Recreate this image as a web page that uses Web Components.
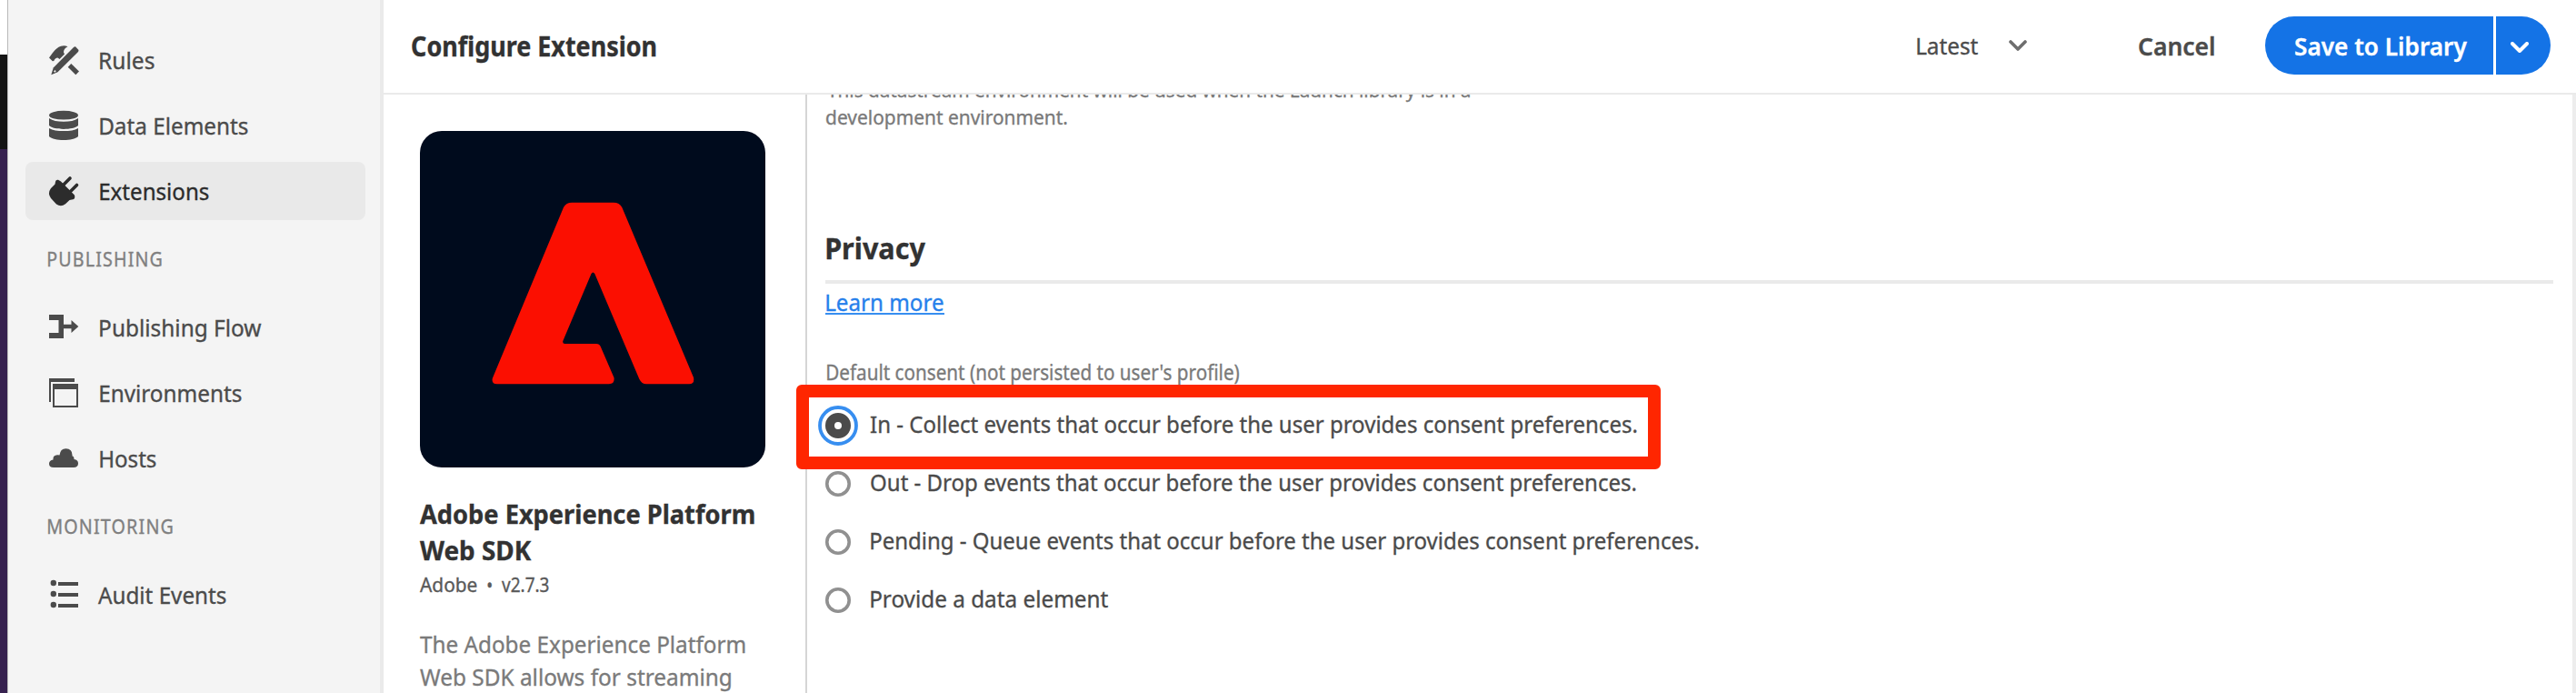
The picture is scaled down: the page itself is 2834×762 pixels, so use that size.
<!DOCTYPE html>
<html lang="en">
<head>
<meta charset="utf-8">
<title>Configure Extension</title>
<style>
html, body { margin: 0; height: 100%; overflow: hidden; background: #fff; }
body { font-family: "Noto Sans", "Open Sans", sans-serif; font-size: 26px; color: #4b4b4b; }
</style>
</head>
<body>
<app-shell>
  <side-nav slot="nav">
    <nav-group>
      <nav-item icon="rules" w="60">Rules</nav-item>
      <nav-item icon="data" w="163">Data Elements</nav-item>
      <nav-item icon="plug" w="120" selected>Extensions</nav-item>
    </nav-group>
    <nav-heading w="125">PUBLISHING</nav-heading>
    <nav-group>
      <nav-item icon="flow" w="178">Publishing Flow</nav-item>
      <nav-item icon="windows" w="156">Environments</nav-item>
      <nav-item icon="cloud" w="62">Hosts</nav-item>
    </nav-group>
    <nav-heading w="137">MONITORING</nav-heading>
    <nav-group>
      <nav-item icon="list" w="141" style="gap:22px">Audit Events</nav-item>
    </nav-group>
  </side-nav>
  <page-header slot="header"></page-header>
  <extension-card slot="card"></extension-card>
  <privacy-form slot="form"></privacy-form>
</app-shell>

<script>
const define = (name, html, after) => {
  const template = document.createElement('template');
  template.innerHTML = html;
  customElements.define(name, class extends HTMLElement {
    connectedCallback() {
      if (this.shadowRoot) return;
      this.attachShadow({ mode: 'open' }).append(template.content.cloneNode(true));
      if (after) after(this, this.shadowRoot);
    }
  });
};

const icons = {
  rules: '<path d="M0 13.500 4 8Q8 2.500 13 0.800Q17 -0.300 20.500 1.200Q15.800 3.500 16 7.500L17 9.500 11.500 15 9.500 13.500Q6.500 13.500 5.300 17L3.800 17.300Z"/><path d="M24.300 20 33 28.500 29.300 32.200 20.700 23.700Z"/><path d="M29 1.300 32.500 4.900Q32.700 6.300 31.500 7.500L9.500 29.300 2.300 32.200 4.700 24.500 27 2Q28.200 0.900 29 1.300Z"/><path d="M5.800 27.800 7 29" stroke="#f4f4f4" stroke-width="2"/>',
  data: '<ellipse cx="16" cy="4.700" rx="16" ry="4.900"/><path d="M0 8C4 10.800 9 11.700 16 11.700S28 10.800 32 8V16C29 18.600 23 19.900 16 19.900S3 18.600 0 16Z"/><path d="M0 18.900C4 21.200 9 22 16 22S28 21.200 32 18.900V28C29 30.700 23 32 16 32S3 30.700 0 28Z"/>',
  plug: '<path d="M7 5.800Q7.500 3.300 10 3.800L13 5.500 27 19.500Q28.500 20.500 28.300 22.500Q28.300 25.500 25 25.500L22.500 26 18 30.300Q13 34 8 30.500L2 24Q-2 18.500 2 13L6.500 8.500Z"/><path d="M15.500 9.500 23 2M23 17 30.500 9.500" stroke="currentColor" stroke-width="3.600" stroke-linecap="round"/>',
  flow: '<path d="M0 2H16V12.800H24.500V8L32.300 15 24.500 22V17.200H16V28H0V22H10.500V8H0Z"/>',
  windows: '<path d="M0 0H28V4H2V26H0Z"/><path fill-rule="evenodd" d="M4 6H32V32H4ZM6 12V30H30V12Z"/>',
  cloud: '<path d="M5 26Q0 26 0 22Q0 18 4.500 17.500Q4 12.500 9 12.200Q10.500 12 11.500 12.600Q12.300 5.300 18.500 5.300Q26 5.500 25.500 13.500Q27.500 13.500 27.500 17Q32 17.500 32 21.600Q32 26 27 26Z"/>',
  list: '<circle cx="4.800" cy="3" r="3.200"/><circle cx="4.800" cy="15" r="3.200"/><circle cx="4.800" cy="27" r="3.200"/><path d="M10 2H32V6H10ZM10 14H32V18H10ZM10 26H32V30H10Z"/>'
};

define('app-shell', `
<style>
:host { display: grid; grid-template-columns: 8px 414px 1fr; height: 762px; width: 2834px; position: relative; overflow: hidden; background: #fff; }
.edge { display: grid; grid-template-rows: 60px 104px 1fr; }
.edge i:nth-child(2) { background: #141414; }
.edge i:nth-child(3) { background: #36214f; }
main { display: grid; grid-template-rows: 104px 658px; min-width: 0; }
.panes { display: grid; grid-template-columns: 464px 1fr; min-height: 0; }
.frame { position: absolute; left: 876px; top: 423px; width: 951px; height: 93px; box-sizing: border-box; border: 14px solid #ff2600; border-radius: 6px; }
</style>
<div class="edge"><i></i><i></i><i></i></div>
<slot name="nav"></slot>
<main><slot name="header"></slot><div class="panes"><slot name="card"></slot><slot name="form"></slot></div></main>
<div class="frame"></div>`);

define('side-nav', `
<style>
:host { display: flex; flex-direction: column; box-sizing: border-box; background: #f4f4f4; border-left: 1px solid #b9b9b9; border-right: 4px solid #eaeaea; padding: 34px 16px 0 19px; }
</style><slot></slot>`);

define('nav-group', `<style>:host { display: flex; flex-direction: column; gap: 8px; }</style><slot></slot>`);

define('nav-heading', `
<style>:host { display: flex; align-items: center; height: 83px; padding: 0 0 3px 25px; font-size: 22px; letter-spacing: 1.300px; color: #808080; }</style>
<fit-text></fit-text>`, (el, root) => {
  const t = root.querySelector('fit-text');
  t.setAttribute('w', el.getAttribute('w'));
  t.textContent = el.textContent;
});

define('nav-item', `
<style>
:host { display: flex; align-items: center; gap: 23.700px; height: 64px; width: 374px; box-sizing: border-box; padding-left: 26px; border-radius: 8px; color: #4b4b4b; }
:host([selected]) { background: #e9e9e9; color: #2c2c2c; }
svg { display: block; width: 32px; height: 32px; fill: currentColor; overflow: visible; flex: none; }
</style>
<svg viewBox="0 0 32 32"></svg><fit-text></fit-text>`, (el, root) => {
  root.querySelector('svg').innerHTML = icons[el.getAttribute('icon')];
  const t = root.querySelector('fit-text');
  t.setAttribute('w', el.getAttribute('w'));
  t.textContent = el.textContent;
});

define('page-header', `
<style>
:host { display: flex; align-items: center; box-sizing: border-box; height: 104px; padding: 0 28px 2px 31px; border-bottom: 2px solid #eaeaea; }
.title { font-size: 29.500px; font-weight: 700; color: #323232; padding-top: 1px; }
.actions { display: flex; align-items: center; margin-left: auto; }
svg { display: block; fill: none; stroke-linecap: round; stroke-linejoin: round; }
.latest { display: flex; align-items: center; gap: 34px; margin-right: 123px; }
.cancel { font-size: 27px; font-weight: 600; margin-right: 56px; }
.split { display: flex; gap: 3px; height: 64px; color: #fff; font-size: 27px; font-weight: 600; }
.save { display: flex; align-items: center; box-sizing: border-box; width: 251px; padding-left: 33px; background: #1473e6; border-radius: 32px 0 0 32px; }
.more { display: flex; align-items: center; box-sizing: border-box; width: 60px; padding: 4px 0 0 16px; background: #1473e6; border-radius: 0 32px 32px 0; }
</style>
<fit-text class="title" w="269">Configure Extension</fit-text>
<div class="actions">
  <div class="latest"><fit-text w="67">Latest</fit-text><svg width="20" height="12" viewBox="0 0 20 12" stroke="#6e6e6e" stroke-width="3.600"><path d="M2 2 10 10 18 2"/></svg></div>
  <fit-text class="cancel" w="83">Cancel</fit-text>
  <div class="split">
    <div class="save"><fit-text w="189">Save to Library</fit-text></div>
    <div class="more"><svg width="20" height="12" viewBox="0 0 20 12" stroke="#fff" stroke-width="4"><path d="M2 2 10 10 18 2"/></svg></div>
  </div>
</div>`);

define('extension-card', `
<style>
:host { display: flex; flex-direction: column; align-items: flex-start; padding: 40px 0 0 40px; overflow: hidden; box-sizing: border-box; }
svg { display: block; flex: none; }
.title { margin-top: 31px; font-size: 29px; font-weight: 700; line-height: 40px; color: #323232; }
.meta { display: flex; margin-top: 4px; font-size: 22px; line-height: 26px; color: #5a5a5a; }
.dot { margin: 0 11px; }
.about { margin-top: 35px; line-height: 36px; color: #7a7a7a; }
</style>
<svg width="380" height="370" viewBox="462 144 380 370">
  <rect x="462" y="144" width="380" height="370" rx="24" fill="#000b1d"/>
  <path fill="#fb0f01" d="M629.300 222.800H675Q681.500 222.800 684.300 228L763 415Q764.500 422.200 758.300 422.200H711Q706 422.200 703.300 416.700L654.300 301Q652.300 298 650.500 301L619.300 375Q618.700 378 621.500 378H656Q659.500 378 660.700 381L675.500 415.300Q676.500 422.200 670 422.200H546.700Q540.500 422 541.800 416L620 228Q622.800 222.800 629.300 222.800Z"/>
</svg>
<div class="title"><fit-text w="368">Adobe Experience Platform</fit-text><fit-text w="123">Web SDK</fit-text></div>
<div class="meta"><fit-text w="63">Adobe</fit-text><fit-text class="dot" w="5">•</fit-text><fit-text w="52">v2.7.3</fit-text></div>
<div class="about"><fit-text w="358">The Adobe Experience Platform</fit-text><fit-text w="342">Web SDK allows for streaming</fit-text></div>`);

define('radio-option', `
<style>
:host { display: flex; align-items: center; height: 64px; gap: 21.500px; }
svg { display: block; width: 28px; height: 28px; overflow: visible; fill: none; flex: none; }
.on { display: none; }
:host([checked]) .on { display: inline; }
:host([checked]) .off { display: none; }
fit-text { padding-bottom: 4px; }
</style>
<svg viewBox="0 0 28 28"><circle class="off" cx="14" cy="14" r="12.200" stroke="#909090" stroke-width="3.600"/><g class="on"><circle cx="14" cy="14" r="20" stroke="#378ef0" stroke-width="3.800"/><circle cx="14" cy="14" r="9" stroke="#4b4b4b" stroke-width="10"/></g></svg>
<fit-text></fit-text>`, (el, root) => {
  const t = root.querySelector('fit-text');
  t.setAttribute('w', el.getAttribute('w'));
  t.textContent = el.textContent;
});

define('privacy-form', `
<style>
:host { display: block; box-sizing: border-box; overflow: hidden; border-left: 2px solid #d5d5d5; border-right: 4px solid #ededed; padding: 0 21px 0 20px; }
.help { margin-top: -20px; font-size: 22.500px; line-height: 30px; color: #7a7a7a; padding-left: 1px; }
.help :first-child { margin-left: 1px; }
h2 { margin: 109px 0 0 1px; font-size: 33px; font-weight: 700; line-height: 40px; color: #323232; }
hr { margin: 15px 0 4px; height: 4px; border: 0; background: #eaeaea; }
a { display: block; width: 131px; height: 28px; line-height: 32px; color: #2680eb; border-bottom: 2px solid #378ef0; }
a fit-text { margin-left: 1px; }
.legend { margin: 48px 0 12px 1.500px; font-size: 23px; line-height: 30px; color: #7a7a7a; }
</style>
<div class="help"><fit-text w="707">This datastream environment will be used when the Launch library is in a</fit-text><fit-text w="265">development environment.</fit-text></div>
<h2><fit-text w="109">Privacy</fit-text></h2>
<hr>
<a><fit-text w="129">Learn more</fit-text></a>
<div class="legend"><fit-text w="453">Default consent (not persisted to user's profile)</fit-text></div>
<radio-option w="843" checked>In - Collect events that occur before the user provides consent preferences.</radio-option>
<radio-option w="842">Out - Drop events that occur before the user provides consent preferences.</radio-option>
<radio-option w="911">Pending - Queue events that occur before the user provides consent preferences.</radio-option>
<radio-option w="261">Provide a data element</radio-option>`);

/* A single line of text condensed or widened so that its ink spans exactly w pixels. */
const ctx = document.createElement('canvas').getContext('2d');
define('fit-text', `
<style>
:host { display: block; white-space: nowrap; flex: none; }
span { display: inline-block; vertical-align: top; transform-origin: 0 0; -webkit-text-stroke: 0.350px currentColor; }
</style><span><slot></slot></span>`, (el, root) => {
  const w = +el.getAttribute('w'), cs = getComputedStyle(el);
  ctx.font = cs.fontWeight + ' ' + cs.fontSize + ' ' + cs.fontFamily;
  ctx.letterSpacing = cs.letterSpacing === 'normal' ? '0px' : cs.letterSpacing;
  const m = ctx.measureText(el.textContent);
  const scale = w / (m.actualBoundingBoxRight + m.actualBoundingBoxLeft);
  el.style.width = w + 'px';
  root.querySelector('span').style.transform =
    'translateX(' + m.actualBoundingBoxLeft * scale + 'px) scaleX(' + scale + ')';
});
</script>
</body>
</html>
